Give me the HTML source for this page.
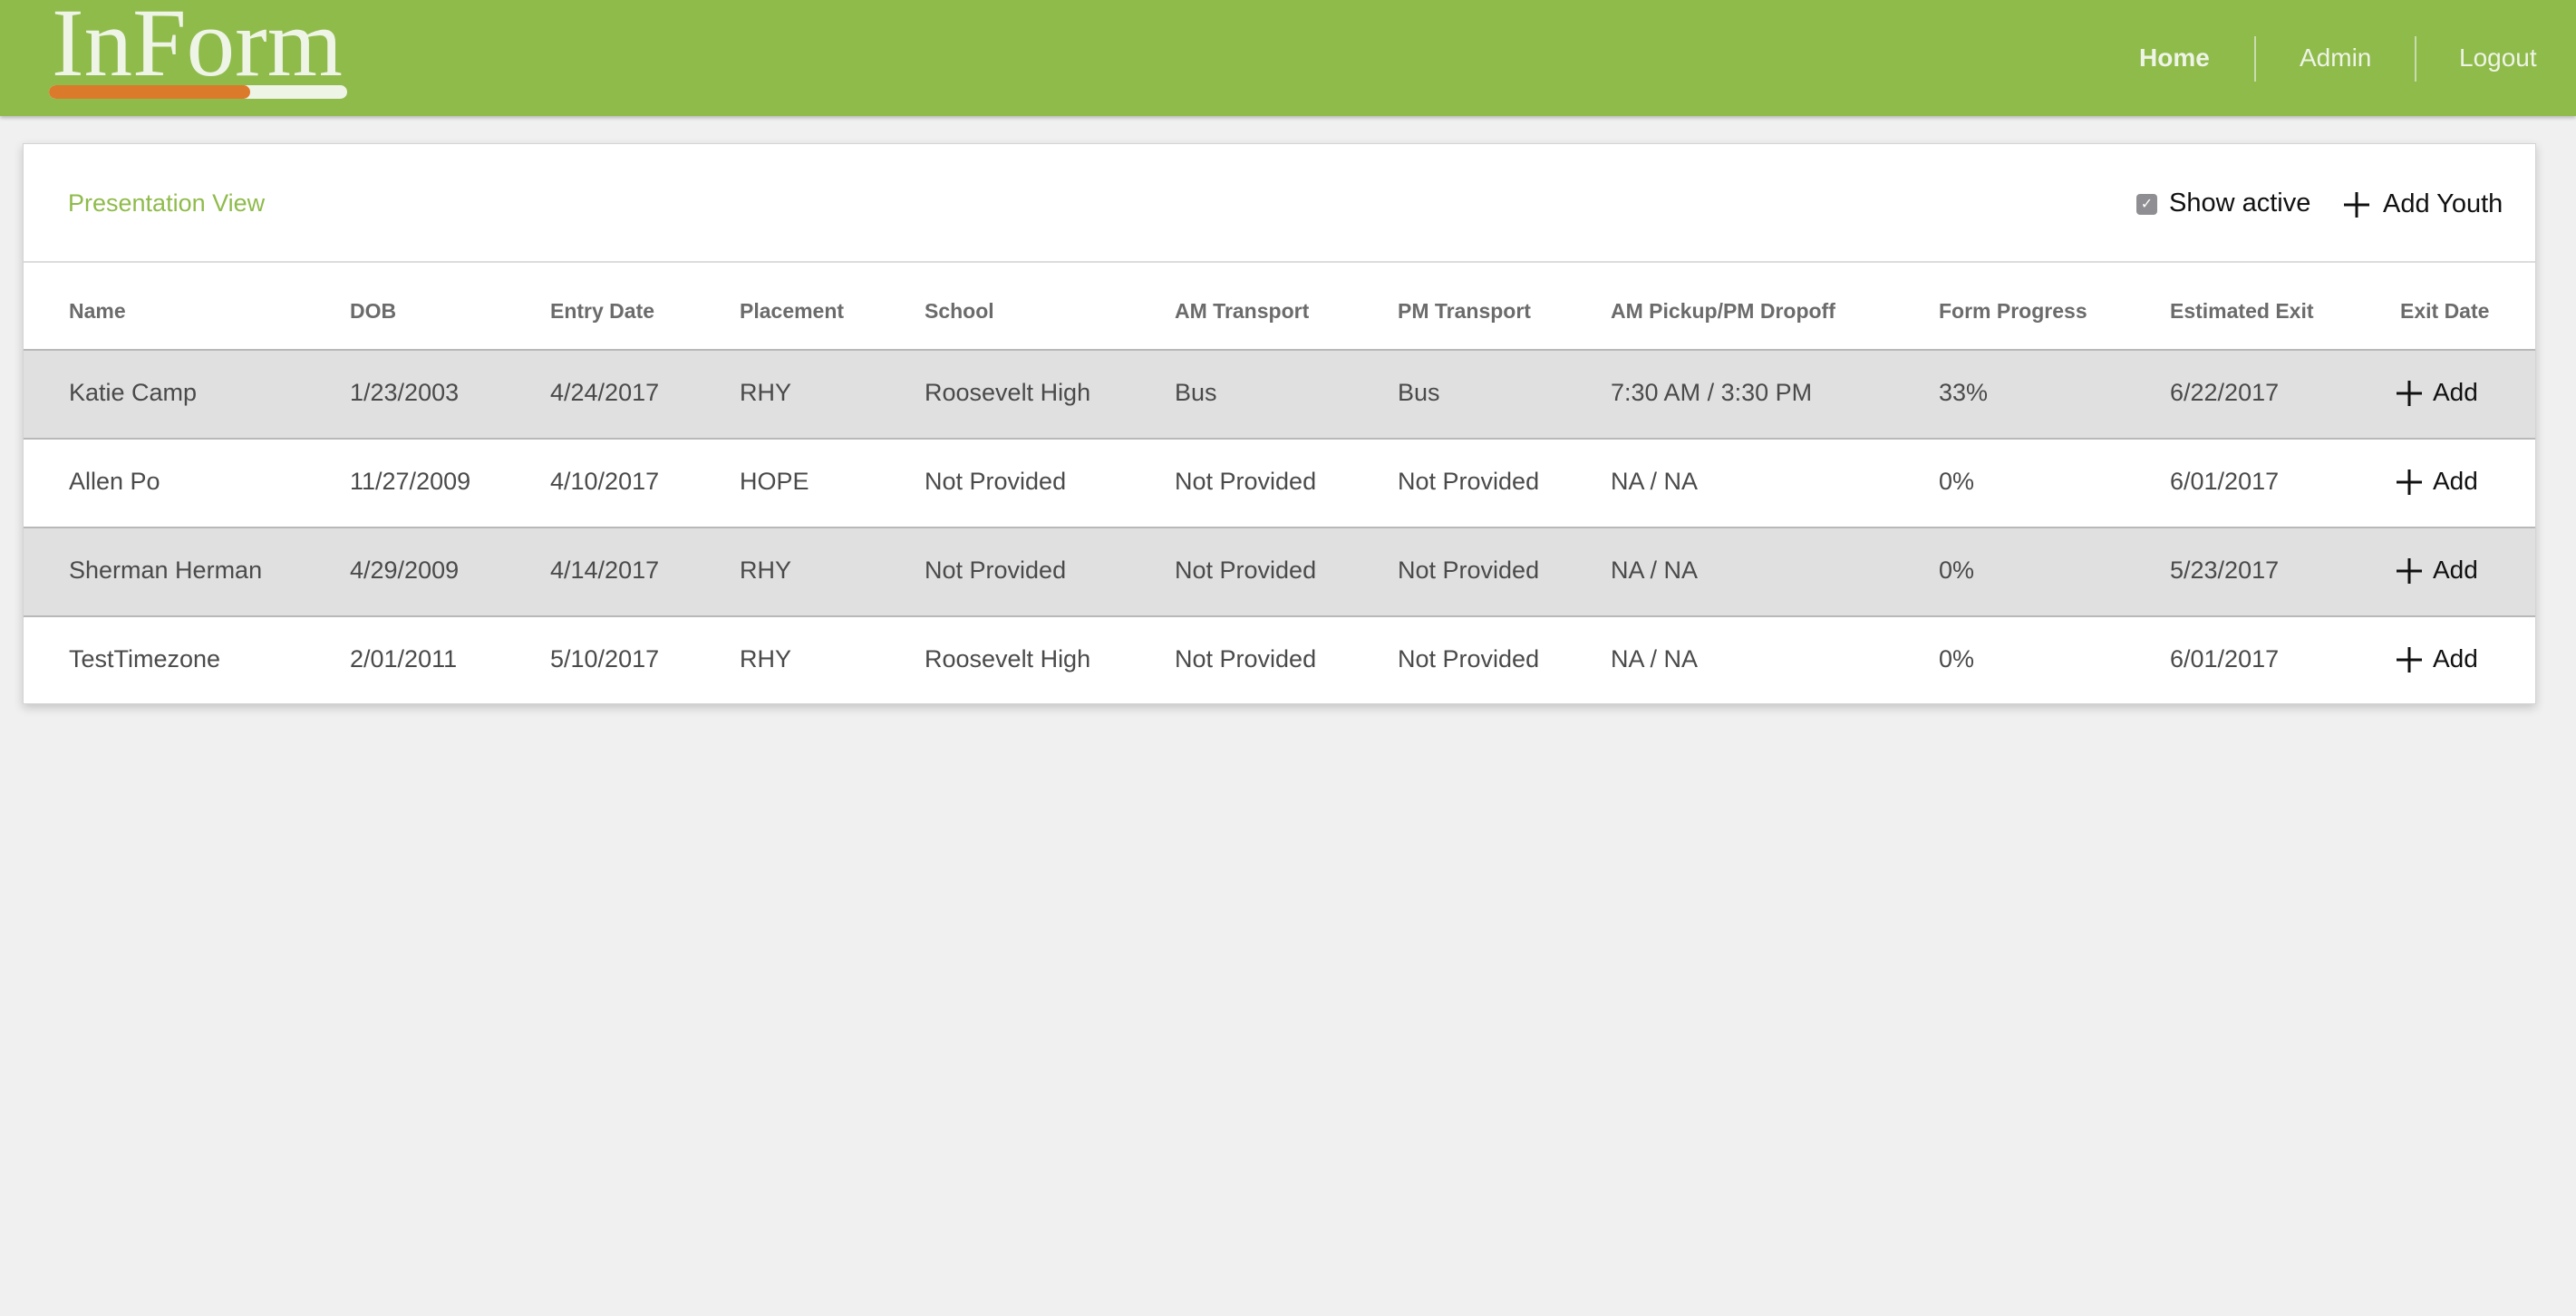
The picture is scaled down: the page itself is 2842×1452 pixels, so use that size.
<!DOCTYPE html>
<html><head><meta charset="utf-8"><style>
*{margin:0;padding:0;box-sizing:border-box}
body{width:2842px;height:1452px;background:#f0f0f0;font-family:"Liberation Sans",Arial,sans-serif;position:relative;overflow:hidden}
.hdr{position:absolute;left:0;top:0;width:2842px;height:128px;background:#8fbb4b;box-shadow:0 2px 4px rgba(0,0,0,.25)}
.logo{position:absolute;left:57px;top:-5px;font-family:"Liberation Serif",serif;font-size:107px;line-height:1;color:#eef4e6;white-space:nowrap}
.bar{position:absolute;left:54px;top:94px;width:329px;height:15px;border-radius:8px;background:#eef4e6;overflow:hidden}
.bar i{position:absolute;left:0;top:0;width:222px;height:15px;background:#dc7a2c;border-radius:8px}
.nav{position:absolute;top:48px;font-size:28px;color:#eef4e6}
.sep{position:absolute;top:40px;width:2px;height:50px;background:#c8dcae}
.card{position:absolute;left:25px;top:158px;width:2773px;height:619px;background:#fff;border:1px solid #d4d4d4;box-shadow:0 4px 10px rgba(0,0,0,.18)}
.t{position:absolute;white-space:nowrap}
.row{position:absolute;left:0;width:2771px;height:98px;border-top:2px solid #b8b8b8}
.g{background:#e0e0e0}
.th{font-weight:bold;font-size:23px;color:#6b6b6b;top:330px}
.td{font-size:27px;color:#4a4a4a}
</style></head><body>
<div class="hdr">
<div class="logo">InForm</div>
<div class="bar"><i></i></div>
<div class="nav" style="left:2360px;font-weight:bold">Home</div>
<div class="sep" style="left:2487px"></div>
<div class="nav" style="left:2537px">Admin</div>
<div class="sep" style="left:2664px"></div>
<div class="nav" style="left:2713px">Logout</div>
</div>
<div class="card">
<div class="t" style="left:49px;top:50px;font-size:27px;color:#8fbb4b">Presentation View</div>
<div class="t" style="left:2331px;top:55px;width:23px;height:23px;border-radius:4px;background:#8e8e93;color:#fff;font-size:16px;text-align:center;line-height:23px">✓</div>
<div class="t" style="left:2367px;top:49px;font-size:29px;color:#111">Show active</div>
<svg class="t" style="left:2560px;top:53px" width="28" height="28"><path d="M14 0V28M0 14H28" stroke="#111" stroke-width="3"/></svg>
<div class="t" style="left:2603px;top:50px;font-size:29px;color:#111">Add Youth</div>
<div style="position:absolute;left:0;top:129px;width:2771px;height:2px;background:#dcdcdc"></div>
</div>
<div id="tbl" style="position:absolute;left:26px;top:0">
<div class="t th" style="left:50px">Name</div>
<div class="t th" style="left:360px">DOB</div>
<div class="t th" style="left:581px">Entry Date</div>
<div class="t th" style="left:790px">Placement</div>
<div class="t th" style="left:994px">School</div>
<div class="t th" style="left:1270px">AM Transport</div>
<div class="t th" style="left:1516px">PM Transport</div>
<div class="t th" style="left:1751px">AM Pickup/PM Dropoff</div>
<div class="t th" style="left:2113px">Form Progress</div>
<div class="t th" style="left:2368px">Estimated Exit</div>
<div class="t th" style="left:2622px">Exit Date</div>
</div>
<div style="position:absolute;left:26px;top:0;width:2771px">
<div class="row g" style="top:385px"></div>
<div class="row" style="top:483px"></div>
<div class="row g" style="top:581px"></div>
<div class="row" style="top:679px;height:98px"></div>
</div>
<div style="position:absolute;left:26px;top:0">
<div class="t td" style="left:50px;top:418px">Katie Camp</div>
<div class="t td" style="left:360px;top:418px">1/23/2003</div>
<div class="t td" style="left:581px;top:418px">4/24/2017</div>
<div class="t td" style="left:790px;top:418px">RHY</div>
<div class="t td" style="left:994px;top:418px">Roosevelt High</div>
<div class="t td" style="left:1270px;top:418px">Bus</div>
<div class="t td" style="left:1516px;top:418px">Bus</div>
<div class="t td" style="left:1751px;top:418px">7:30 AM / 3:30 PM</div>
<div class="t td" style="left:2113px;top:418px">33%</div>
<div class="t td" style="left:2368px;top:418px">6/22/2017</div>
<div class="t td" style="left:50px;top:516px">Allen Po</div>
<div class="t td" style="left:360px;top:516px">11/27/2009</div>
<div class="t td" style="left:581px;top:516px">4/10/2017</div>
<div class="t td" style="left:790px;top:516px">HOPE</div>
<div class="t td" style="left:994px;top:516px">Not Provided</div>
<div class="t td" style="left:1270px;top:516px">Not Provided</div>
<div class="t td" style="left:1516px;top:516px">Not Provided</div>
<div class="t td" style="left:1751px;top:516px">NA / NA</div>
<div class="t td" style="left:2113px;top:516px">0%</div>
<div class="t td" style="left:2368px;top:516px">6/01/2017</div>
<div class="t td" style="left:50px;top:614px">Sherman Herman</div>
<div class="t td" style="left:360px;top:614px">4/29/2009</div>
<div class="t td" style="left:581px;top:614px">4/14/2017</div>
<div class="t td" style="left:790px;top:614px">RHY</div>
<div class="t td" style="left:994px;top:614px">Not Provided</div>
<div class="t td" style="left:1270px;top:614px">Not Provided</div>
<div class="t td" style="left:1516px;top:614px">Not Provided</div>
<div class="t td" style="left:1751px;top:614px">NA / NA</div>
<div class="t td" style="left:2113px;top:614px">0%</div>
<div class="t td" style="left:2368px;top:614px">5/23/2017</div>
<div class="t td" style="left:50px;top:712px">TestTimezone</div>
<div class="t td" style="left:360px;top:712px">2/01/2011</div>
<div class="t td" style="left:581px;top:712px">5/10/2017</div>
<div class="t td" style="left:790px;top:712px">RHY</div>
<div class="t td" style="left:994px;top:712px">Roosevelt High</div>
<div class="t td" style="left:1270px;top:712px">Not Provided</div>
<div class="t td" style="left:1516px;top:712px">Not Provided</div>
<div class="t td" style="left:1751px;top:712px">NA / NA</div>
<div class="t td" style="left:2113px;top:712px">0%</div>
<div class="t td" style="left:2368px;top:712px">6/01/2017</div>
</div>
<div style="position:absolute;left:2644px;top:0">
<svg class="t" style="left:0;top:420px" width="28" height="28"><path d="M14 0V28M0 14H28" stroke="#111" stroke-width="3"/></svg>
<div class="t" style="left:40px;top:417px;font-size:28px;color:#111">Add</div>
<svg class="t" style="left:0;top:518px" width="28" height="28"><path d="M14 0V28M0 14H28" stroke="#111" stroke-width="3"/></svg>
<div class="t" style="left:40px;top:515px;font-size:28px;color:#111">Add</div>
<svg class="t" style="left:0;top:616px" width="28" height="28"><path d="M14 0V28M0 14H28" stroke="#111" stroke-width="3"/></svg>
<div class="t" style="left:40px;top:613px;font-size:28px;color:#111">Add</div>
<svg class="t" style="left:0;top:714px" width="28" height="28"><path d="M14 0V28M0 14H28" stroke="#111" stroke-width="3"/></svg>
<div class="t" style="left:40px;top:711px;font-size:28px;color:#111">Add</div>
</div>
</body></html>
